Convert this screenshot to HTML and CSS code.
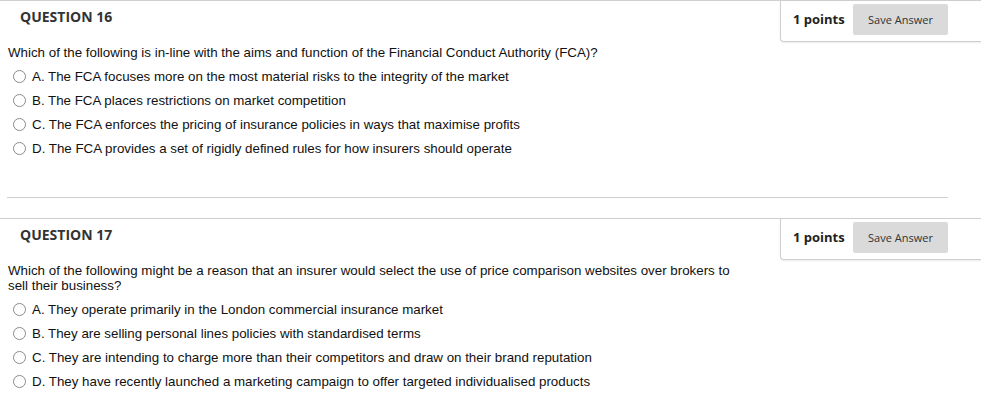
FILE: index.html
```html
<!DOCTYPE html>
<html>
<head>
<meta charset="utf-8">
<link rel="stylesheet" href="styles.css">
</head>
<body>
<div class="question">
  <div class="q-header">
    <h3 class="q-title">QUESTION 16</h3>
    <div class="points">
      <span class="points-label">1 points</span>
      <button class="save-btn">Save Answer</button>
    </div>
  </div>
  <div class="q-body">
    <p class="q-text">Which of the following is in-line with the aims and function of the Financial Conduct Authority (FCA)?</p>
    <ul class="options">
      <li class="option"><span class="radio"></span><span>A. The FCA focuses more on the most material risks to the integrity of the market</span></li>
      <li class="option"><span class="radio"></span><span>B. The FCA places restrictions on market competition</span></li>
      <li class="option"><span class="radio"></span><span>C. The FCA enforces the pricing of insurance policies in ways that maximise profits</span></li>
      <li class="option"><span class="radio"></span><span>D. The FCA provides a set of rigidly defined rules for how insurers should operate</span></li>
    </ul>
  </div>
  <hr class="separator">
</div>
<div class="question">
  <div class="q-header">
    <h3 class="q-title">QUESTION 17</h3>
    <div class="points">
      <span class="points-label">1 points</span>
      <button class="save-btn">Save Answer</button>
    </div>
  </div>
  <div class="q-body">
    <p class="q-text">Which of the following might be a reason that an insurer would select the use of price comparison websites over brokers to sell their business?</p>
    <ul class="options">
      <li class="option"><span class="radio"></span><span>A. They operate primarily in the London commercial insurance market</span></li>
      <li class="option"><span class="radio"></span><span>B. They are selling personal lines policies with standardised terms</span></li>
      <li class="option"><span class="radio"></span><span>C. They are intending to charge more than their competitors and draw on their brand reputation</span></li>
      <li class="option"><span class="radio"></span><span>D. They have recently launched a marketing campaign to offer targeted individualised products</span></li>
    </ul>
  </div>
</div>
</body>
</html>
```
FILE: styles.css
```css
html, body {
  margin: 0;
  padding: 0;
  background: #fff;
}
body {
  font-family: "Liberation Sans", Arial, sans-serif;
  color: #000;
}
.question {
  border-top: 1px solid #cfcfcf;
}
.q-header {
  display: flex;
  justify-content: space-between;
  align-items: flex-start;
}
.q-title {
  margin: 0;
  padding: 7px 0 0 20px;
  font-family: "Open Sans", sans-serif;
  font-weight: 700;
  font-size: 14px;
  line-height: 18px;
  color: #333;
}
.points {
  width: 201px;
  height: 41px;
  box-sizing: border-box;
  border-left: 1px solid #cfcfcf;
  border-bottom: 1px solid #cfcfcf;
  border-bottom-left-radius: 4px;
  box-shadow: 0 1px 2px rgba(0,0,0,0.08);
  display: flex;
  align-items: flex-start;
  padding: 3px 0 0 12px;
}
.points-label {
  font-family: "Open Sans", sans-serif;
  font-weight: 700;
  font-size: 13px;
  line-height: 18px;
  color: #222;
  padding-top: 6px;
  width: 60px;
}
.save-btn {
  width: 95px;
  height: 31px;
  border: none;
  border-radius: 2px;
  background: #dadada;
  font-family: "Open Sans", sans-serif;
  font-size: 11px;
  color: #333;
  padding: 0;
  margin: 0;
}
.q-body {
  padding: 3px 8px 0 8px;
}
.q-text {
  margin: 0;
  max-width: 735px;
  font-size: 13.333px;
  line-height: 15px;
  color: #111;
}
.options {
  list-style: none;
  margin: 4px 0 0 0;
  padding: 0;
}
.q-text + .options {
  margin-top: 4px;
}
.option {
  display: flex;
  align-items: center;
  height: 24px;
  font-size: 13.333px;
  color: #111;
}
.radio {
  width: 11px;
  height: 11px;
  border: 1px solid #8a8a8a;
  border-radius: 50%;
  margin: 0 6px 0 5px;
  flex: none;
}
.separator {
  margin: 37px 33px 20px 7px;
  border: none;
  border-top: 1px solid #cfcfcf;
  height: 0;
}
```
